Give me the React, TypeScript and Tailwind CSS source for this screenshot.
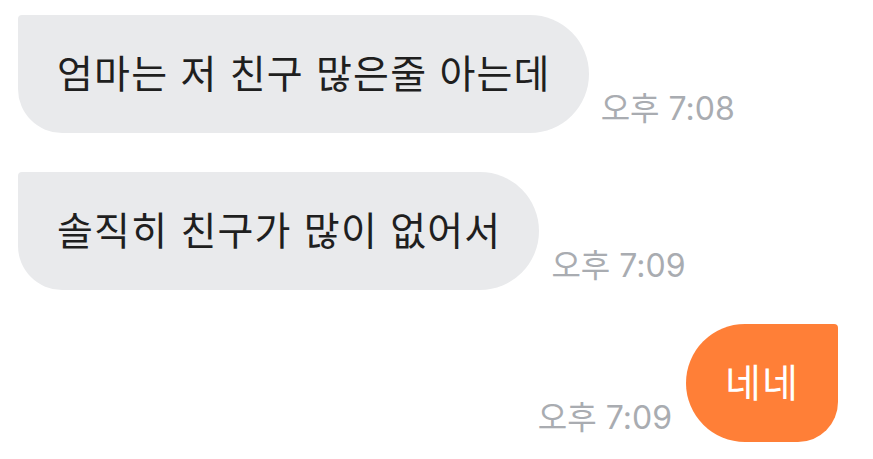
const font = {
  fontFamily: '"Inter", "Noto Sans CJK KR", sans-serif',
};

const Time = ({ label }: { label: string }) => (
  <div className="pb-[8px] text-[32px] leading-none text-[#a9acb1] whitespace-nowrap">
    {label}
  </div>
);

const App = () => {
  return (
    <div
      className="w-[873px] h-[459px] bg-white overflow-hidden pl-[18px] pt-[15px] pr-[35px]"
      style={font}
    >
      {/* 엄마 메시지 1 */}
      <div className="flex items-end gap-[12px]">
        <div className="h-[118px] flex items-center pl-[39px] pr-[38px] bg-[#e9eaec] rounded-tl-[4px] rounded-bl-[44px] rounded-r-[59px] text-[39px] tracking-[1.2px] text-[#1f1f1f] whitespace-nowrap">
          엄마는 저 친구 많은줄 아는데
        </div>
        <Time label="오후 7:08" />
      </div>

      {/* 메시지 2 */}
      <div className="flex items-end gap-[12px] mt-[39px]">
        <div className="h-[118px] flex items-center pl-[39px] pr-[38px] bg-[#e9eaec] rounded-tl-[4px] rounded-bl-[44px] rounded-r-[59px] text-[39px] tracking-[1.2px] text-[#1f1f1f] whitespace-nowrap">
          솔직히 친구가 많이 없어서
        </div>
        <Time label="오후 7:09" />
      </div>

      {/* 내 메시지 */}
      <div className="flex items-end justify-end gap-[14px] mt-[34px]">
        <Time label="오후 7:09" />
        <div className="h-[118px] w-[152px] flex items-center justify-center bg-[#ff7f37] rounded-tr-[4px] rounded-l-[59px] rounded-br-[40px] text-[39px] tracking-[1px] text-white">
          네네
        </div>
      </div>
    </div>
  );
};

export default App;
